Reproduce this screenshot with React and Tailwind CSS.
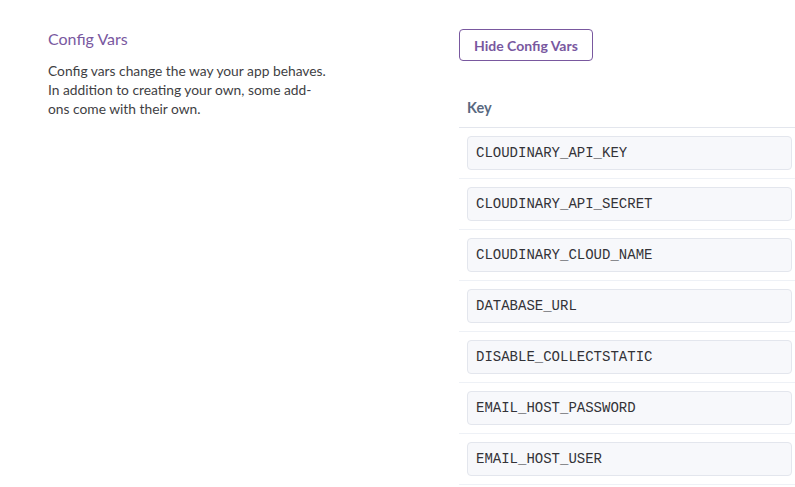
import React from "react";

const keys = [
  "CLOUDINARY_API_KEY",
  "CLOUDINARY_API_SECRET",
  "CLOUDINARY_CLOUD_NAME",
  "DATABASE_URL",
  "DISABLE_COLLECTSTATIC",
  "EMAIL_HOST_PASSWORD",
  "EMAIL_HOST_USER",
];

const App = () => {
  return (
    <div className="w-[795px] h-[487px] overflow-hidden bg-white font-['Lato',sans-serif]">
      <div className="flex pt-[29px]">
        <div className="w-[459px] shrink-0 pl-12">
          <h2 className="text-[16px] leading-5 text-[#79589f]">Config Vars</h2>
          <p className="mt-[12px] w-[282px] text-[13.8px] leading-[19px] text-[#3f3f44]">
            Config vars change the way your app behaves. In addition to creating your own, some add-ons come with their own.
          </p>
        </div>
        <div className="flex-1">
          <button
            className="h-[32px] px-[14px] border border-[#79589f] rounded-[4px] text-[14px] font-bold text-[#79589f]"
            type="button"
          >
            Hide Config Vars
          </button>
          <div className="mt-[30px]">
            <div className="h-[37px] pl-2 pt-[6px] border-b border-[#e3e6ed] text-[14.5px] font-bold text-[#596981]">
              Key
            </div>
            {keys.map((k) => (
              <div key={k} className="pl-2 pr-[3px] py-2 border-b border-[#eef1f6]">
                <div className="h-[34px] px-2 flex items-center border border-[#e3e6ed] rounded-[4px] bg-[#f7f8fb] font-['Liberation_Mono',monospace] text-[14px] text-[#333338]">
                  {k}
                </div>
              </div>
            ))}
          </div>
        </div>
      </div>
    </div>
  );
};

export default App;
